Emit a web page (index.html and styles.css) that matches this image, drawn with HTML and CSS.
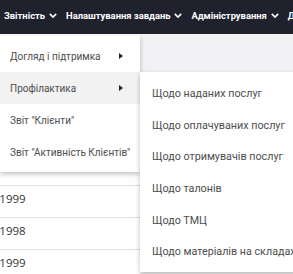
FILE: index.html
```html
<html lang="uk">

<head>
    <meta charset="UTF-8">
    <meta name="viewport" content="width=device-width, initial-scale=1.0">
    <title>Звітність</title>
    <link rel="stylesheet" href="styles.css">
</head>

<body>
    <nav class="topbar">
        <div class="nav-item">Звітність <svg class="chev" viewBox="0 0 10 6"><path d="M1 1l4 4 4-4" /></svg></div>
        <div class="nav-item">Налаштування завдань <svg class="chev" viewBox="0 0 10 6"><path d="M1 1l4 4 4-4" /></svg></div>
        <div class="nav-item">Адміністрування <svg class="chev" viewBox="0 0 10 6"><path d="M1 1l4 4 4-4" /></svg></div>
        <div class="nav-item">Довідники</div>
    </nav>

    <div class="page">
        <div class="table-wrap">
            <div class="table">
                <div class="thead"></div>
                <div class="trow">01.01.1999</div>
                <div class="trow">01.01.1998</div>
                <div class="trow">01.01.1999</div>
            </div>
        </div>
        <div class="side"></div>

        <ul class="menu">
            <li class="menu-item">Догляд і підтримка <span class="arrow"></span></li>
            <li class="menu-item active">Профілактика <span class="arrow"></span></li>
            <li class="menu-item">Звіт "Клієнти"</li>
            <li class="menu-item">Звіт "Активність Клієнтів"</li>
        </ul>

        <ul class="menu submenu">
            <li class="menu-item">Щодо наданих послуг</li>
            <li class="menu-item">Щодо оплачуваних послуг</li>
            <li class="menu-item">Щодо отримувачів послуг</li>
            <li class="menu-item">Щодо талонів</li>
            <li class="menu-item">Щодо ТМЦ</li>
            <li class="menu-item">Щодо матеріалів на складах</li>
        </ul>
    </div>
</body>

</html>
```

FILE: styles.css
```css
html,
body {
    margin: 0;
    padding: 0;
    overflow: hidden;
}

body {
    font-family: "Roboto", sans-serif;
    background: #fff;
}

.topbar {
    display: flex;
    align-items: center;
    height: 34px;
    padding: 0 0 4px 4px;
    box-sizing: border-box;
    background-color: #1f212c;
    white-space: nowrap;
}

.nav-item {
    display: flex;
    align-items: center;
    margin-right: 9px;
    color: #fff;
    font-size: 9.4px;
    font-weight: 700;
}

.chev {
    width: 8px;
    height: 5px;
    margin-left: 4px;
    fill: none;
    stroke: #fff;
    stroke-width: 2;
}

.page {
    position: relative;
    display: grid;
    grid-template-columns: 140px 1fr;
    height: 240px;
}

.table-wrap {
    overflow: hidden;
    background: #fff;
}

.table {
    margin-left: -33px;
    font-family: "Open Sans", sans-serif;
    font-size: 11.5px;
    color: #333;
}

.thead {
    height: 151px;
}

.trow {
    height: 32px;
    line-height: 26px;
    border-top: 1px solid #dedede;
    box-sizing: border-box;
}

.side {
    background: #f2f2f4;
}

.menu {
    position: absolute;
    top: 2px;
    left: 0;
    width: 140px;
    margin: 0;
    padding: 4px 0;
    list-style: none;
    background: #fff;
    box-shadow: 0 2px 5px rgba(0, 0, 0, 0.25);
}

.menu-item {
    display: flex;
    align-items: center;
    height: 32px;
    padding: 0 10px;
    color: #4d4d4d;
    font-size: 10px;
    white-space: nowrap;
}

.menu-item.active {
    background: #f2f2f2;
}

.arrow {
    margin-left: auto;
    margin-right: 7px;
    border-left: 4px solid #222;
    border-top: 3px solid transparent;
    border-bottom: 3px solid transparent;
}

.submenu {
    top: 38px;
    left: 140px;
    width: 170px;
    padding: 6px 0 4px;
}

.submenu .menu-item {
    padding: 0 12px;
    height: 31.6px;
    font-size: 10.75px;
}
```
